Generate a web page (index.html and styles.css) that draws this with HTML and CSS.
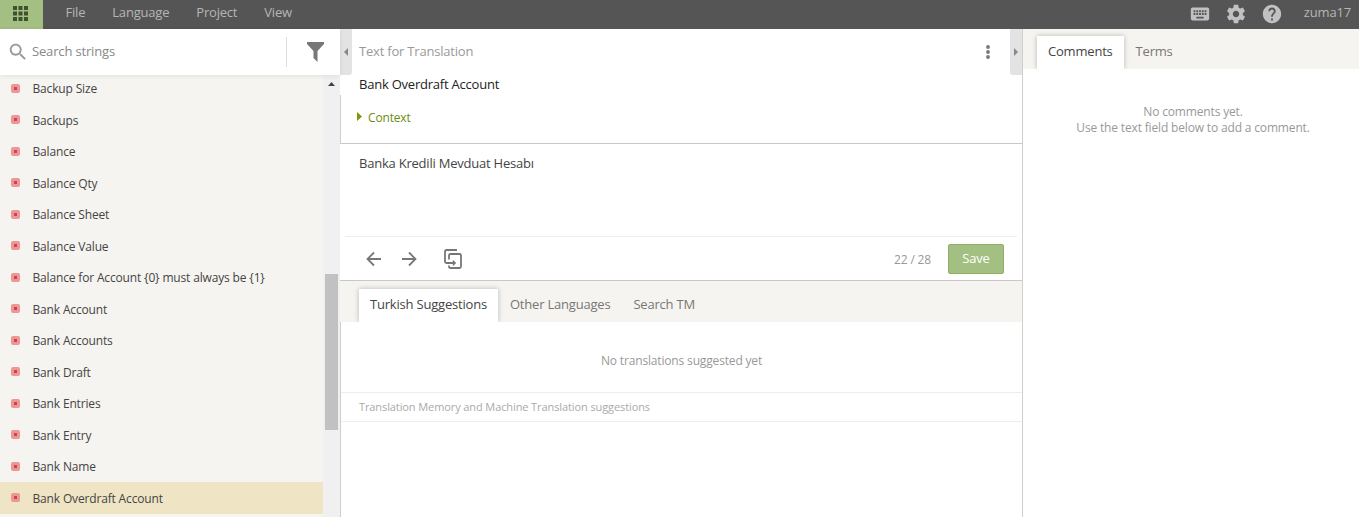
FILE: index.html
```html
<!DOCTYPE html>
<html lang="en">
<head>
    <meta charset="UTF-8">
    <meta name="viewport" content="width=device-width, initial-scale=1.0">
    <title>Translation editor</title>
    <link rel="stylesheet" href="styles.css">
</head>
<body>
    <header class="topbar">
        <a class="apps">
            <svg width="15" height="15" viewBox="0 0 15 15" fill="#40512f">
                <path d="M0 0h4v4H0zM5.5 0h4v4h-4zM11 0h4v4h-4zM0 5.5h4v4H0zM5.5 5.5h4v4h-4zM11 5.5h4v4h-4zM0 11h4v4H0zM5.5 11h4v4h-4zM11 11h4v4h-4z"/>
            </svg>
        </a>
        <nav class="menu">
            <a>File</a>
            <a>Language</a>
            <a>Project</a>
            <a>View</a>
        </nav>
        <div class="tools">
            <svg width="22" height="22" viewBox="0 0 24 24"><path d="M20 5H4c-1.1 0-1.99.9-1.99 2L2 17c0 1.1.9 2 2 2h16c1.1 0 2-.9 2-2V7c0-1.100-.9-2-2-2zm-9 3h2v2h-2V8zm0 3h2v2h-2v-2zM8 8h2v2H8V8zm0 3h2v2H8v-2zm-1 2H5v-2h2v2zm0-3H5V8h2v2zm9 7H8v-2h8v2zm0-4h-2v-2h2v2zm0-3h-2V8h2v2zm3 3h-2v-2h2v2zm0-3h-2V8h2v2z"/></svg>
            <svg width="22" height="22" viewBox="0 0 24 24"><path d="M19.430 12.980c.04-.32.07-.64.07-.98s-.03-.66-.07-.98l2.110-1.650c.19-.15.24-.42.12-.64l-2-3.460c-.12-.22-.39-.3-.61-.22l-2.490 1c-.52-.4-1.080-.73-1.690-.98l-.38-2.650C14.460 2.180 14.250 2 14 2h-4c-.25 0-.46.18-.49.42l-.38 2.650c-.61.25-1.170.59-1.690.98l-2.490-1c-.23-.09-.49 0-.61.22l-2 3.460c-.13.22-.07.49.12.64l2.110 1.650c-.04.32-.07.65-.07.98s.03.66.07.98l-2.110 1.650c-.19.15-.24.42-.12.64l2 3.460c.12.22.39.3.61.22l2.490-1c.52.4 1.080.73 1.690.98l.38 2.650c.03.24.24.42.49.42h4c.25 0 .46-.18.49-.42l.38-2.650c.61-.25 1.170-.59 1.690-.98l2.490 1c.23.09.49 0 .61-.22l2-3.460c.12-.22.07-.49-.12-.64l-2.110-1.650zM12 15.500c-1.930 0-3.500-1.570-3.500-3.500s1.570-3.500 3.500-3.500 3.500 1.570 3.500 3.500-1.570 3.500-3.500 3.500z"/></svg>
            <svg width="22" height="22" viewBox="0 0 24 24"><path d="M12 2C6.480 2 2 6.480 2 12s4.480 10 10 10 10-4.480 10-10S17.520 2 12 2zm1 17h-2v-2h2v2zm2.070-7.750l-.9.920C13.450 12.900 13 13.500 13 15h-2v-.5c0-1.100.45-2.100 1.170-2.830l1.240-1.260c.37-.36.59-.86.59-1.410 0-1.100-.9-2-2-2s-2 .9-2 2H8c0-2.210 1.790-4 4-4s4 1.790 4 4c0 .88-.36 1.680-.93 2.250z"/></svg>
        </div>
        <a class="user">zuma17</a>
    </header>

    <main class="workspace">
        <!-- String list -->
        <aside class="strings">
            <div class="search">
                <svg class="search-icon" width="22" height="22" viewBox="0 0 24 24"><path d="M15.500 14h-.79l-.28-.27C15.410 12.590 16 11.110 16 9.500 16 5.910 13.090 3 9.500 3S3 5.910 3 9.500 5.910 16 9.500 16c1.610 0 3.090-.59 4.230-1.570l.27.28v.79l5 4.990L20.490 19l-4.990-5zm-6 0C7.010 14 5 11.990 5 9.500S7.010 5 9.500 5 14 7.010 14 9.500 11.990 14 9.500 14z"/></svg>
                <span class="search-text">Search strings</span>
                <span class="filter">
                    <svg width="17" height="20" viewBox="0 0 17 20"><path d="M0 0h17v2L10.500 9V20L6.500 16V9L0 2z"/></svg>
                </span>
            </div>
            <div class="list-wrap">
                <ul class="list">
                    <li>Backup Size</li>
                    <li>Backups</li>
                    <li>Balance</li>
                    <li>Balance Qty</li>
                    <li>Balance Sheet</li>
                    <li>Balance Value</li>
                    <li>Balance for Account {0} must always be {1}</li>
                    <li>Bank Account</li>
                    <li>Bank Accounts</li>
                    <li>Bank Draft</li>
                    <li>Bank Entries</li>
                    <li>Bank Entry</li>
                    <li>Bank Name</li>
                    <li class="selected">Bank Overdraft Account</li>
                </ul>
                <div class="scrollbar">
                    <svg width="7" height="4" viewBox="0 0 7 4"><path d="M3.500 0L7 4H0z"/></svg>
                    <div class="thumb"></div>
                </div>
            </div>
        </aside>

        <!-- Editor -->
        <section class="editor">
            <div class="source">
                <div class="source-head">
                    <span class="handle left"><svg width="4" height="8" viewBox="0 0 4 8"><path d="M4 0v8L0 4z"/></svg></span>
                    <span class="title">Text for Translation</span>
                    <svg class="more" width="4" height="14" viewBox="0 0 4 14"><circle cx="2" cy="2" r="1.900"/><circle cx="2" cy="7" r="1.900"/><circle cx="2" cy="12" r="1.900"/></svg>
                    <span class="handle right"><svg width="4" height="8" viewBox="0 0 4 8"><path d="M0 0v8l4-4z"/></svg></span>
                </div>
                <div class="source-text">Bank Overdraft Account</div>
                <div class="context">
                    <svg width="5" height="9" viewBox="0 0 5 9"><path d="M0 0v9l5-4.500z"/></svg>
                    <span>Context</span>
                </div>
            </div>
            <div class="translation">
                <div class="translation-text">Banka Kredili Mevduat Hesabı</div>
                <div class="actions">
                    <svg class="stroke prev" width="16" height="16" viewBox="0 0 16 16"><path d="M15 8H2M8 1.500L1.500 8 8 14.500"/></svg>
                    <svg class="stroke next" width="16" height="16" viewBox="0 0 16 16"><path d="M1 8h13M8 1.500L14.500 8 8 14.500"/></svg>
                    <svg class="stroke copy" width="20" height="22" viewBox="0 0 20 22">
                        <path d="M14 2H3.500Q2 2 2 3.500V13.500Q2 15 3.500 15H11M6 11.500V7.500Q6 6 7.500 6H16.500Q18 6 18 7.500V18.500Q18 20 16.500 20H7.500Q6 20 6 18.500V17.500"/>
                        <path class="tip" d="M9.800 11.700l3.400 3.300-3.400 3.300z"/>
                    </svg>
                    <span class="count">22 / 28</span>
                    <button class="save">Save</button>
                </div>
            </div>
            <div class="tabs">
                <a class="tab active">Turkish Suggestions</a>
                <a class="tab">Other Languages</a>
                <a class="tab">Search TM</a>
            </div>
            <div class="suggestions">
                <div class="empty">No translations suggested yet</div>
                <div class="tm">Translation Memory and Machine Translation suggestions</div>
            </div>
        </section>

        <!-- Comments -->
        <aside class="comments">
            <div class="tabs">
                <a class="tab active">Comments</a>
                <a class="tab">Terms</a>
            </div>
            <p>No comments yet.<br>Use the text field below to add a comment.</p>
        </aside>
    </main>
</body>
</html>
```
FILE: styles.css
```css
* {
    box-sizing: border-box;
}
body {
    margin: 0;
    height: 100vh;
    display: flex;
    flex-direction: column;
    overflow: hidden;
    font-family: "Open Sans", sans-serif;
    font-size: 13px;
    line-height: 18px;
    letter-spacing: -0.16px;
    color: #444;
    background: #fff;
}
svg {
    display: block;
    flex: none;
}

/* top bar */
.topbar {
    height: 29px;
    flex: none;
    display: flex;
    background: #555;
    color: #b5b5b5;
}
.apps {
    width: 43px;
    padding: 6px 0 0 13px;
    background: #a3bf82;
}
.menu {
    display: flex;
    gap: 27px;
    padding: 3px 0 0 22.5px;
    letter-spacing: -0.2px;
}
.tools {
    display: flex;
    gap: 14px;
    margin-left: auto;
    padding-top: 3px;
    fill: #c1c1c1;
}
.user {
    padding: 3px 8px 0 21px;
}

.workspace {
    flex: 1;
    min-height: 0;
    display: flex;
}

/* left column */
.strings {
    width: 340px;
    flex: none;
    display: flex;
    flex-direction: column;
}
.search {
    height: 46px;
    flex: none;
    display: flex;
    align-items: center;
    padding-left: 7px;
    color: #888;
    background: #fff;
    box-shadow: 0 1px 5px rgba(0, 0, 0, 0.08);
    z-index: 1;
}
.search-icon {
    fill: #999;
}
.search-text {
    margin: 0 0 2px 3px;
}
.filter {
    width: 54px;
    height: 30px;
    margin-left: auto;
    padding: 5px 0 0 20px;
    border-left: 1px solid #ddd;
    fill: #777;
}
.list-wrap {
    flex: 1;
    min-height: 0;
    display: flex;
    overflow: hidden;
    background: #f6f4f0;
}
.list {
    flex: 1;
    margin: -2.5px 0 0;
    padding: 0;
    list-style: none;
    font-size: 12px;
}
.list li {
    height: 31.5px;
    display: flex;
    align-items: center;
    padding: 2px 0 0 11px;
}
.list li::before {
    content: "";
    box-sizing: border-box;
    width: 9px;
    height: 9px;
    margin: 0 12.5px 2px 0;
    border: 3px solid #ed9696;
    border-radius: 2px;
    background: #cf4545;
}
.list .selected {
    background: #efe5c5;
}
.scrollbar {
    width: 17px;
    padding: 7px 0 0 2px;
    background: #f0f0f0;
    fill: #444;
}
.scrollbar svg {
    margin-left: 3px;
}
.thumb {
    width: 13px;
    height: 156px;
    margin-top: 188px;
    background: #c1c1c1;
}

/* middle column */
.editor {
    flex: 1;
    min-width: 0;
    display: flex;
    flex-direction: column;
}
.source {
    height: 115px;
    border-bottom: 1px solid #c8c8c8;
}
.source-head {
    height: 46px;
    display: flex;
    align-items: center;
    color: #999;
}
.handle {
    width: 12px;
    height: 46px;
    display: flex;
    align-items: center;
    justify-content: center;
    background: #e3e3e3;
    fill: #888;
}
.handle.left {
    border-bottom-right-radius: 3px;
}
.handle.right {
    border-bottom-left-radius: 3px;
}
.title {
    margin: 0 0 2px 7px;
    letter-spacing: -0.2px;
}
.more {
    margin: 0 20px 0 auto;
    fill: #777;
}
.source-text {
    padding-left: 19px;
    letter-spacing: -0.22px;
    color: #222;
}
.context {
    height: 48px;
    margin-top: 2px;
    padding: 14px 0 0 16px;
    display: flex;
    gap: 6px;
    border-left: 1px solid #cfcfc8;
    font-size: 12px;
    color: #6d8c10;
    fill: #7a9a0c;
}
.context svg {
    margin-top: 3px;
}
.translation {
    height: 137px;
    padding: 0 5px;
    border-bottom: 1px solid #c8c8c8;
}
.translation-text {
    height: 92px;
    padding: 10px 14px 0;
    letter-spacing: -0.22px;
}
.actions {
    height: 44px;
    display: flex;
    align-items: center;
    padding: 0 13px 0 21px;
    border-top: 1px solid #eee;
}
.stroke {
    fill: none;
    stroke: #777;
    stroke-width: 1.8;
}
.next {
    margin-left: 19px;
}
.copy {
    margin-left: 26px;
}
.tip {
    fill: #777;
    stroke: none;
}
.count {
    margin: 2px 0 0 auto;
    font-size: 12px;
    color: #999;
}
.save {
    width: 56px;
    height: 30px;
    margin-left: 17px;
    padding: 0 0 2px;
    border: 1px solid #8fae66;
    border-radius: 2px;
    background: #a3bf82;
    font: inherit;
    letter-spacing: inherit;
    color: #fff;
}

/* tabs */
.tabs {
    height: 41px;
    flex: none;
    display: flex;
    align-items: flex-end;
    padding-left: 19px;
    overflow: hidden;
    background: #f6f4f0;
}
.tab {
    height: 33px;
    padding: 6px 11px 0 12px;
    letter-spacing: -0.2px;
    color: #777;
}
.tab.active {
    padding-left: 11px;
    background: #fff;
    color: #444;
    box-shadow: 0 0 5px rgba(0, 0, 0, 0.25);
}
.suggestions {
    flex: 1;
    border-left: 1px solid #cfcfc8;
    font-size: 12px;
    color: #999;
}
.empty {
    height: 70px;
    padding-top: 30px;
    text-align: center;
}
.tm {
    height: 30px;
    padding: 5px 18px;
    border: 1px solid #eee;
    border-width: 1px 0;
    font-size: 11px;
    letter-spacing: -0.1px;
    color: #aaa;
}

/* right column */
.comments {
    width: 337px;
    flex: none;
    border-left: 1px solid #cfcfc8;
}
.comments .tabs {
    height: 40px;
    padding-left: 14px;
}
.comments p {
    margin: 35px 0 0;
    padding-left: 4px;
    text-align: center;
    font-size: 12px;
    line-height: 16px;
    color: #999;
}
```
